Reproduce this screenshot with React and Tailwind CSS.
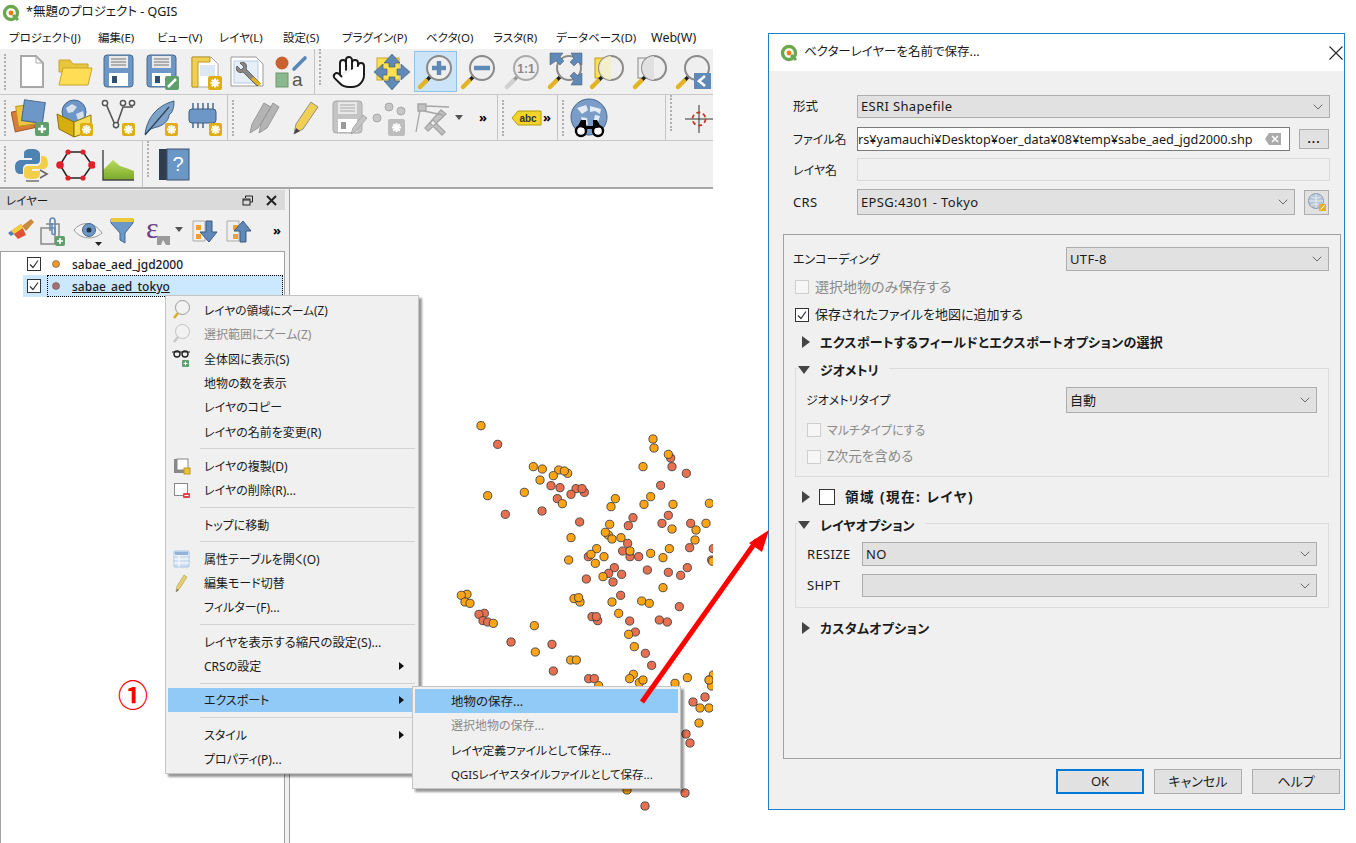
import { ChevronDown, Hand } from 'lucide-react';

// drawing helpers: toolbar icons sit in a 40x40 box
const Ico = ({ children, className = '' }) => (
  <svg viewBox="0 0 40 40" className={`w-[40px] h-[40px] shrink-0 ${className}`}>{children}</svg>
);

const Star = ({ x = 25, y = 25, s = 13, fill = '#dfae12' }) => (
  <g>
    <rect x={x} y={y} width={s} height={s} rx="2" fill={fill} />
    <g stroke="#fff" strokeWidth="2" transform={`translate(${x + s / 2} ${y + s / 2})`}>
      <line x1="-4.5" x2="4.5" />
      <line y1="-4.5" y2="4.5" />
      <line x1="-3.2" y1="-3.2" x2="3.2" y2="3.2" />
      <line x1="-3.2" y1="3.2" x2="3.2" y2="-3.2" />
    </g>
  </g>
);

const Mag = ({ children, gray }) => (
  <>
    <line x1="14" y1="25" x2="10" y2="29" stroke={gray ? '#999' : '#222'} strokeWidth="3.5" />
    <line x1="10" y1="29" x2="4" y2="35" stroke={gray ? '#d0d0d0' : '#e3b321'} strokeWidth="4.5" strokeLinecap="round" />
    <circle cx="23" cy="16" r="12" fill="#efefef" stroke={gray ? '#aaa' : '#8a8a8a'} strokeWidth="2" />
    {children}
  </>
);

const Qlogo = () => (
  <svg viewBox="0 0 18 18" className="w-[18px] h-[18px] shrink-0">
    <circle cx="9" cy="9" r="6.5" fill="#fff" stroke="#6aa84f" strokeWidth="3.4" />
    <circle cx="9" cy="9" r="2.4" fill="#ee7913" />
    <line x1="11" y1="11" x2="16" y2="16" stroke="#6aa84f" strokeWidth="3" />
  </svg>
);

const Floppy = ({ gray }) => (
  <>
    <rect x="6" y="3" width="29" height="32" rx="3" fill={gray ? '#c4c4c4' : '#6c97c6'} stroke={gray ? '#aaa' : '#4a6a8c'} />
    <rect x="11" y="4" width="19" height="12" fill="#e8e8e8" />
    <path d="M13 7h15M13 10h15M13 13h15" stroke={gray ? '#aaa' : '#777'} />
    <rect x="11" y="21" width="19" height="13" fill="#fff" />
    <rect x="14" y="24" width="5" height="7" fill={gray ? '#999' : '#2f4f73'} />
  </>
);

const Toolbar1 = {
  newDoc: <Ico><path d="M9 4h15l7 7v24H9z" fill="#fff" stroke="#a8a8a8" strokeWidth="2" /><path d="M24 4v7h7" fill="none" stroke="#a8a8a8" /></Ico>,
  open: <Ico><path d="M4 8h11l3 4h15v8H4z" fill="#e8c53d" stroke="#c9a52a" /><path d="M4 33l4-17h29l-4 17z" fill="#ffdd55" stroke="#c9a52a" /></Ico>,
  save: <Ico><Floppy /></Ico>,
  saveAs: <Ico><Floppy /><rect x="24" y="24" width="14" height="14" rx="2" fill="#5f9f6b" /><line x1="27" y1="35" x2="35" y2="27" stroke="#fff" strokeWidth="2.5" /></Ico>,
  layout: <Ico><path d="M8 5h19l7 7v23H8z" fill="#fff" stroke="#aaa" /><path d="M16 13h15v11H16z" fill="#dde8f5" /><path d="M8 5h18v5H14v25H8z" fill="#f0cf55" stroke="#bb9a22" /><Star x={24} y={24} s={14} /></Ico>,
  props: <Ico><path d="M4 5h25l7 7v22H4z" fill="#fff" stroke="#999" /><path d="M7 9h24v22H7z" fill="#e6eef8" stroke="#b9cbe2" /><path d="M13 11c4-2 8 1 6 6l14 14-3 3-14-14c-5 2-8-2-6-6l4 4 3-3z" fill="#888" stroke="#444" strokeWidth=".7" /><line x1="25" y1="26" x2="33" y2="33" stroke="#e3b321" strokeWidth="3.5" /></Ico>,
  style: <Ico><circle cx="12" cy="11" r="6.5" fill="#c9622f" /><line x1="24" y1="17" x2="35" y2="6" stroke="#5a86b8" strokeWidth="3.6" strokeLinecap="round" /><rect x="6" y="21" width="12" height="14" fill="#8cb88f" stroke="#6d9870" /><text x="22" y="34" fontSize="19" fill="#555" fontFamily="Liberation Sans">a</text></Ico>,
  panSel: <Ico><rect x="5" y="6" width="22" height="22" fill="#ffe14d" stroke="#c9a52a" /><rect x="13" y="13" width="14" height="14" fill="#ffe14d" /><path d="M20 2l8 9h-5v4h-6v-4h-5zM20 38l-8-9h5v-4h6v4h5zM2 20l9-8v5h4v6h-4v5zM38 20l-9 8v-5h-4v-6h4v-5z" fill="#5f8ab8" stroke="#456" strokeWidth=".6" /></Ico>,
  zoomIn: <Ico><Mag /><path d="M23 9v14M16 16h14" stroke="#5f8ab8" strokeWidth="4.5" /></Ico>,
  zoomOut: <Ico><Mag /><path d="M15 16h16" stroke="#5f8ab8" strokeWidth="4.5" /></Ico>,
  zoom11: <Ico><Mag gray /><text x="23" y="20.5" textAnchor="middle" fontSize="12" fontWeight="700" fill="#888" fontFamily="Liberation Sans">1:1</text></Ico>,
  zoomFull: <Ico><Mag /><path d="M4 1h13l-3 4 4 4-4 4-4-4-6 4zM36 1v12l-4-3-4 4-4-4 4-4-3-5zM36 33H25l3-5-4-4 4-4 4 4 4-3z" fill="#5f8ab8" stroke="#456" strokeWidth=".5" /></Ico>,
  zoomSel: <Ico><rect x="7" y="6" width="15" height="20" fill="#ffe14d" stroke="#b99a22" /><Mag /><path d="M23 4a12 12 0 0 0 0 24z" fill="#f3edc6" opacity=".9" /></Ico>,
  zoomLayer: <Ico><rect x="7" y="6" width="15" height="20" fill="#eee" stroke="#888" /><Mag /><path d="M23 4a12 12 0 0 0 0 24z" fill="#e0e0e0" /></Ico>,
  zoomLast: <Ico><Mag /><rect x="20" y="21" width="17" height="16" fill="#5f8ab8" /><path d="M31 24l-6 5 6 5" fill="none" stroke="#fff" strokeWidth="2.6" /></Ico>,
};

const Toolbar2 = {
  source: <Ico><rect x="2" y="12" width="20" height="20" fill="#d77d3a" stroke="#a55a25" transform="rotate(-12 12 22)" /><rect x="6" y="7" width="20" height="20" fill="#efc43f" stroke="#b99a22" transform="rotate(-8 16 17)" /><rect x="12" y="3" width="21" height="21" fill="#6c97c6" stroke="#46688e" transform="rotate(8 22 13)" /><rect x="24" y="24" width="14" height="14" rx="2" fill="#5f9f6b" /><path d="M31 27v8M27 31h8" stroke="#fff" strokeWidth="2.4" /></Ico>,
  geopkg: <Ico><circle cx="20" cy="14" r="12" fill="#6c97c6" stroke="#46688e" /><path d="M12 10l6-4 5 3-4 5-5 1zM22 16l7-3 1 6-6 3z" fill="#d5e0ee" /><path d="M3 16l17 8v15L5 31z" fill="#d8ad10" stroke="#8c7208" /><path d="M20 24l17-7v16l-17 6z" fill="#f5dd55" stroke="#8c7208" /><Star x={26} y={25} s={13} /></Ico>,
  vertex: <Ico><path d="M9 6l10 23 7-20h10" fill="none" stroke="#555" strokeWidth="1.6" /><g fill="#fff" stroke="#555" strokeWidth="1.5"><circle cx="8" cy="5" r="2.6" /><circle cx="19" cy="27" r="2.6" /><circle cx="26" cy="5" r="2.6" /><circle cx="35" cy="5" r="2.6" /></g><Star /></Ico>,
  feather: <Ico><path d="M5 36C7 22 15 8 34 3c0 8-2 12-5 14 0 6-7 11-12 12-4 1-7 2-9 4z" fill="#7ea3c9" stroke="#3f5f82" /><path d="M5 37L29 9" stroke="#2d4258" strokeWidth="1.2" /><Star /></Ico>,
  chip: <Ico><rect x="5" y="11" width="27" height="14" rx="3" fill="#6c97c6" stroke="#3f5f82" /><path d="M9 5v6M14 5v6M19 5v6M24 5v6M29 5v6M9 25v5M14 25v5M19 25v5" stroke="#3f5f82" strokeWidth="1.4" /><Star x={25} y={25} s={13} /></Ico>,
  pencils: <Ico><path d="M7 35l2-9L21 5l7 4-13 21zM16 35l2-9L30 5l6 4-12 21z" fill="#b4b4b4" stroke="#999" /></Ico>,
  pencil: <Ico><path d="M9 36l2-10L26 4l7 5-15 22z" fill="#f0cf55" stroke="#8f8f8f" /><path d="M9 36l2-6 4 3z" fill="#444" /></Ico>,
  saveGray: <Ico><Floppy gray /><path d="M24 36l2-6 10-13 4 3-11 13z" fill="#c4c4c4" stroke="#aaa" /></Ico>,
  points: <Ico><g fill="#c6c6c6" stroke="#aaa"><circle cx="8" cy="20" r="4" /><circle cx="20" cy="9" r="4" /><circle cx="32" cy="13" r="4" /></g><Star x={19} y={21} s={17} fill="#bdbdbd" /></Ico>,
  digitize: <Ico><path d="M7 6h8v7H7zM9 12L5 34M15 8l23 1M13 13l19 4M30 12L14 30l3 3 18-17zM22 22l12 12-3 3-12-12z" fill="#c2c2c2" stroke="#a5a5a5" strokeWidth="1.3" /></Ico>,
  abc: <Ico><path d="M8 20l6-7h23v14H14z" fill="#f5d327" stroke="#b49c12" /><text x="24" y="24" textAnchor="middle" fontSize="10" fontWeight="700" fill="#333" fontFamily="Liberation Sans">abc</text></Ico>,
  globe: <Ico><circle cx="20" cy="19" r="18" fill="#7a9cc6" stroke="#46688e" /><path d="M8 10l9-3 2 5-6 4zM21 8l11 3-1 5-5-3-5 1zM12 19l6 1 1 7-5-1zM26 17l5 1-2 6-4-2z" fill="#e4ebf3" /><circle cx="12" cy="33" r="5" fill="#fff" stroke="#000" strokeWidth="2.4" /><circle cx="29" cy="33" r="5" fill="#fff" stroke="#000" strokeWidth="2.4" /><path d="M9 28l3-6h5v6h7v-6h4l4 7-9 2h-5z" fill="#000" /></Ico>,
  cross: <Ico><path d="M20 7v28M6 21h28" stroke="#333" strokeWidth="1" /><circle cx="20" cy="21" r="6.5" fill="none" stroke="#c0392b" strokeWidth="1.8" strokeDasharray="4 2.8" /></Ico>,
};

const Toolbar3 = {
  python: <Ico><path d="M20 5c-7 0-8 2-8 5v4h8v2H9c-3 0-6 2-6 7s2 7 5 7h3v-5c0-3 2-5 5-5h8c3 0 4-2 4-4v-6c0-3-3-5-8-5z" fill="#4d83b3" /><path d="M20 35c5 0 8-2 8-5v-3h-8v-2h11c3 0 5-2 5-6s-2-7-5-7h-2v5c0 3-2 5-5 5h-8c-3 0-4 2-4 4v5c0 3 3 4 8 4z" fill="#f3cf49" /><path d="M28 26l7 4-7 4" fill="none" stroke="#666" strokeWidth="1.6" /><line x1="14" y1="37" x2="27" y2="37" stroke="#666" strokeWidth="1.4" /></Ico>,
  hexagon: <Ico><path d="M13 8h15l9 13-9 13H13L5 21z" fill="none" stroke="#222" strokeWidth="1.5" /><g fill="#e0202a"><circle cx="13" cy="8" r="2.6" /><circle cx="28" cy="8" r="2.6" /><circle cx="28" cy="34" r="2.6" /><circle cx="13" cy="34" r="2.6" /><circle cx="5" cy="21" r="3.8" /><circle cx="37" cy="21" r="3.8" /></g></Ico>,
  profile: <Ico><defs><linearGradient id="prof" x1="0" y1="0" x2="0" y2="1"><stop offset="0" stopColor="#b8dc5a" /><stop offset="1" stopColor="#7aa82c" /></linearGradient></defs><path d="M5 36V26l10-10 7 6 6 2 8 3v9z" fill="url(#prof)" /><path d="M5 6v30h31" fill="none" stroke="#444" strokeWidth="1.4" /></Ico>,
  help: <Ico><rect x="5" y="5" width="8" height="31" fill="#2e3e4e" /><rect x="13" y="5" width="22" height="31" fill="#6b97c6" stroke="#3c536b" /><text x="24" y="27" textAnchor="middle" fontSize="20" fill="#fff" fontFamily="Liberation Sans">?</text></Ico>,
};

const DockIcons = {
  brush: <Ico><path d="M9 20l10-7 5 11-8 4z" fill="#e0533a" /><path d="M9 20l10-7 2 4-9 6z" fill="#f2cf3d" /><path d="M6 22l3-2 3 3-3 2z" fill="#4c7fbd" /><path d="M20 15l9-7 3 3-8 9z" fill="#c98a3c" /></Ico>,
  clip: <Ico><path d="M9 17h14v16H9z" fill="#eee" stroke="#888" strokeWidth="1.5" /><path d="M14 13h13v15" fill="none" stroke="#888" strokeWidth="1.5" /><path d="M18 20V10c0-4 5-4 5 0v12c0 2-3 2-3 0V12" fill="none" stroke="#5f8ab8" strokeWidth="1.6" /><rect x="23" y="25" width="10" height="10" rx="2" fill="#5f9f6b" /><path d="M28 27v6M25 30h6" stroke="#fff" strokeWidth="1.6" /></Ico>,
  eye: <Ico><path d="M6 19c7-9 20-9 28 3-8 7-21 7-28-3z" fill="#f2f2f2" stroke="#999" /><circle cx="21" cy="19" r="6.5" fill="#6c97c6" stroke="#46688e" /><circle cx="21" cy="19" r="2.5" fill="#234" /><path d="M27 31h7l-3.500 4z" fill="#222" /></Ico>,
  filter: <Ico><path d="M9 8h22v4l-8 10v10l-5-3v-7L9 12z" fill="#6c97c6" stroke="#46688e" /><rect x="9" y="7" width="22" height="4" fill="#ecc93a" /></Ico>,
  epsilon: <Ico><text x="9" y="27" fontSize="30" fill="#6b3f8c" fontFamily="Liberation Serif">ε</text><path d="M20 25h13v9h-4l-3-5-2 5h-4z" fill="#9a9a9a" /></Ico>,
  down: <Ico><path d="M8 10h12v20H8z" fill="none" stroke="#aaa" /><rect x="11" y="14" width="5" height="5" fill="#f0a030" /><rect x="11" y="23" width="5" height="5" fill="#f0a030" /><path d="M21 10h6v11h5l-8 10-9-10h6z" fill="#5f8ab8" stroke="#3c5a7d" /></Ico>,
  up: <Ico><path d="M8 10h12v20H8z" fill="none" stroke="#aaa" /><rect x="14" y="14" width="5" height="5" fill="#f0a030" /><rect x="14" y="23" width="5" height="5" fill="#f0a030" /><path d="M21 31h6V20h5l-8-10-9 10h6z" fill="#5f8ab8" stroke="#3c5a7d" /></Ico>,
};

const Handle = () => <div className="w-[3px] h-[36px] ml-[4px] border-l-[2px] border-dotted border-[#b0b0b0] shrink-0" />;
const Slot = ({ children, className = 'w-[43px]' }) => <div className={`h-full flex items-center justify-center shrink-0 ${className}`}>{children}</div>;
const More = ({ className = '' }) => <span className={`text-[13px] font-bold text-black leading-none ${className}`}>»</span>;
const Drop = ({ className = '' }) => <svg viewBox="0 0 8 5" className={`w-[8px] h-[5px] shrink-0 ${className}`}><path d="M0 0h8L4 5z" fill="#555" /></svg>;
const Group = ({ children, className }) => <div className={`h-full flex items-center border-r border-[#c4c4c4] shrink-0 ${className}`}>{children}</div>;
// the glyphs of this stack ride a little high, so text gets nudged down inside its flex row
const T = ({ children, className = '' }) => <span className={`block pt-[2px] whitespace-nowrap ${className}`}>{children}</span>;
const T1 = ({ children, className = '' }) => <span className={`block whitespace-nowrap ${className}`}>{children}</span>;

const menus = [
  ['プロジェクト(J)', 'w-[89px]'], ['編集(E)', 'w-[59px]'], ['ビュー(V)', 'w-[62px]'], ['レイヤ(L)', 'w-[64px]'], ['設定(S)', 'w-[59px]'],
  ['プラグイン(P)', 'w-[84px]'], ['ベクタ(O)', 'w-[67px]'], ['ラスタ(R)', 'w-[63px]'], ['データベース(D)', 'w-[95px]'], ['Web(W)', 'w-[60px] text-[12.5px]'],
];

// map points, read off at 3x and kept in that scale
const orange3x = [[123,77],[280,200],[307,207],[383,220],[356,210],[373,213],[340,227],[300,240],[253,277],[143,287],[367,311],[393,413],[386,480],[639,117],[642,144],[685,163],[609,200],[632,290],[526,296],[513,320],[612,313],[699,313],[808,310],[509,373],[798,370],[696,387],[768,390],[505,405],[496,397],[516,417],[543,413],[765,420],[688,446],[470,446],[570,453],[453,463],[492,470],[632,460],[669,473],[818,484],[466,490],[489,530],[669,563],[81,583],[64,586],[75,606],[90,610],[402,596],[420,606],[416,593],[516,606],[605,603],[628,610],[160,670],[536,640],[283,677],[566,703],[583,740],[286,756],[392,780],[409,780],[476,857],[580,823],[569,836],[598,848],[609,840],[705,850],[742,833],[808,840],[820,825],[815,858]];
const red3x = [[173,133],[333,257],[360,263],[433,277],[408,266],[426,266],[393,283],[352,296],[306,333],[196,343],[419,366],[692,174],[696,200],[739,220],[662,256],[685,346],[579,353],[565,377],[666,370],[752,370],[563,430],[749,443],[820,446],[548,453],[445,470],[570,470],[596,470],[815,480],[742,503],[523,503],[506,520],[545,523],[622,510],[685,517],[722,526],[439,537],[519,546],[542,586],[718,620],[133,640],[117,643],[129,662],[143,666],[456,650],[473,662],[469,650],[569,663],[658,660],[682,666],[586,696],[213,726],[336,733],[616,760],[635,796],[340,813],[446,836],[463,836]];
const orangePx = [[709,680],[700,708],[709,708],[699,723],[627,790]];
const redPx = [[705,697],[693,702],[686,734],[690,743],[685,793],[645,806]];

const MapDots = () => (
  <svg viewBox="290 189 423 654" className="w-[423px] h-[654px]">
    <g stroke="#3d3d3d" strokeWidth=".9">
      {red3x.map(([x, y], i) => <circle key={i} cx={440 + x / 3} cy={400 + y / 3} r="4.1" fill="#e8704e" />)}
      {redPx.map(([x, y], i) => <circle key={i} cx={x} cy={y} r="4.1" fill="#e8704e" />)}
      {orange3x.map(([x, y], i) => <circle key={i} cx={440 + x / 3} cy={400 + y / 3} r="4.1" fill="#ffa514" />)}
      {orangePx.map(([x, y], i) => <circle key={i} cx={x} cy={y} r="4.1" fill="#ffa514" />)}
    </g>
  </svg>
);

const Check = ({ checked, disabled, className = '' }) => (
  <div className={`w-[14px] h-[14px] shrink-0 border flex items-center justify-center ${disabled ? 'border-[#cfcfcf] bg-[#f6f6f6]' : 'border-[#333] bg-white'} ${className}`}>
    {checked && <svg viewBox="0 0 12 12" className="w-[12px] h-[12px]"><path d="M2 6.5l3 3 5-7" fill="none" stroke="#333" strokeWidth="1.2" /></svg>}
  </div>
);

const MenuIcons = {
  zoom: <svg viewBox="0 0 20 20" className="w-[20px] h-[20px]"><line x1="7" y1="13" x2="3" y2="18" stroke="#d8ae2a" strokeWidth="2.6" /><circle cx="11.500" cy="7.500" r="7" fill="#f2f2f2" stroke="#999" /></svg>,
  zoomGray: <svg viewBox="0 0 20 20" className="w-[20px] h-[20px]"><line x1="7" y1="13" x2="3" y2="18" stroke="#c8c8c8" strokeWidth="2.6" /><circle cx="11.500" cy="7.500" r="7" fill="#f2f2f2" stroke="#c0c0c0" /></svg>,
  glasses: <svg viewBox="0 0 20 20" className="w-[20px] h-[20px]"><circle cx="6" cy="5" r="3" fill="none" stroke="#222" strokeWidth="1.4" /><circle cx="14" cy="5" r="3" fill="none" stroke="#222" strokeWidth="1.4" /><path d="M1 3h18" stroke="#222" strokeWidth="1" /><rect x="11" y="11" width="7" height="7" rx="1" fill="#5f9f6b" /><path d="M14.5 12.5v4M12.500 14.500h4" stroke="#fff" /></svg>,
  dup: <svg viewBox="0 0 20 20" className="w-[20px] h-[20px]"><rect x="3" y="3" width="14" height="14" fill="#888" /><rect x="6" y="3" width="11" height="11" fill="#fff" stroke="#888" /><rect x="13" y="12" width="6" height="6" fill="#e9c23a" stroke="#b99a22" /></svg>,
  del: <svg viewBox="0 0 20 20" className="w-[20px] h-[20px]"><rect x="3.500" y="3.500" width="13" height="12" fill="#fff" stroke="#888" /><rect x="12" y="13" width="7" height="5" rx="1" fill="#e0444c" /><path d="M13.500 15.500h4" stroke="#fff" /></svg>,
  table: <svg viewBox="0 0 20 20" className="w-[20px] h-[20px]"><rect x="3" y="2" width="15" height="16" rx="1" fill="#cfe0f2" stroke="#a9c3de" /><path d="M3 6h15M3 10h15M3 14h15M8 6v12" stroke="#fff" /><rect x="4" y="3" width="13" height="3" fill="#8fb2d6" /></svg>,
  pencil: <svg viewBox="0 0 20 20" className="w-[20px] h-[20px]"><path d="M5 19l1-6 7-11 3 2-7 11z" fill="#e6cf6a" stroke="#a89a5a" strokeWidth=".6" /><path d="M5 19l1-3 2 1z" fill="#666" /></svg>,
};

const RightTri = ({ className = '' }) => <svg viewBox="0 0 5 8" className={`w-[5px] h-[8px] shrink-0 ${className}`}><path d="M0 0l5 4-5 4z" fill="#111" /></svg>;

const Item = ({ icon, text, dim, active, sub, textClass = '' }) => (
  <div className={`h-[24.3px] flex items-center ${active ? 'bg-[#91c9f7]' : ''}`}>
    <div className="w-[36px] shrink-0 pl-[3px]">{icon}</div>
    <T className={`flex-1 ${dim ? 'text-[#8a8a8a]' : ''} ${textClass}`}>{text}</T>
    {sub && <RightTri className="mr-[12px]" />}
  </div>
);
const Sep = () => <div className="h-[10px] flex items-center pl-[32px] pr-[1px]"><div className="w-full h-px bg-[#d2d2d2]" /></div>;

const Combo = ({ children, className = '', textClass = '' }) => (
  <div className={`flex items-center justify-between pl-[3px] pr-[3px] bg-[#e1e1e1] border border-[#adadad] shrink-0 ${className}`}>
    <span className={`block ${textClass}`}>{children}</span>
    <ChevronDown className="w-[16px] h-[16px] text-[#555]" strokeWidth={1.3} />
  </div>
);
const TriRight = () => <svg viewBox="0 0 8 12" className="w-[8px] h-[12px] shrink-0"><path d="M0 0l8 6-8 6z" fill="#444" /></svg>;
const TriDown = () => <svg viewBox="0 0 12 8" className="w-[12px] h-[8px] shrink-0"><path d="M0 0h12L6 8z" fill="#444" /></svg>;
const DlgButton = ({ children, primary }) => (
  <div className={`w-[88px] h-[25px] flex items-center justify-center bg-[#e1e1e1] border ${primary ? 'border-[2px] border-[#0078d7]' : 'border-[#adadad]'}`}><T1 className="text-[13px]">{children}</T1></div>
);
const Legend = ({ children }) => (
  <div className="absolute left-[2px] -top-[8px] h-[18px] flex items-center gap-[10px] pr-[10px] bg-[#f0f0f0] font-bold"><TriDown /><T1 className="text-[13px]">{children}</T1></div>
);
const latin = 'text-[13px] tracking-[0.35px]';

export default function App() {
  return (
    <div className="relative w-[1356px] h-[843px] overflow-hidden flex bg-white text-[12px] leading-none text-[#1a1a1a] font-['Noto_Sans','Noto_Sans_CJK_JP',sans-serif] [font-feature-settings:'palt']">
      {/* QGIS main window */}
      <div className="w-[713px] h-[843px] shrink-0 flex flex-col">
        <div className="h-[25px] flex items-center gap-[6px] pl-[2px]">
          <Qlogo />
          <span className="text-[12.5px]">*無題のプロジェクト - QGIS</span>
        </div>
        <div className="h-[24px] flex items-center pl-[9px]">
          {menus.map(([label, w]) => <T key={label} className={`shrink-0 text-[11.5px] ${w}`}>{label}</T>)}
        </div>

        <div className="h-[46px] flex bg-[#f0f0f0] border-b border-[#c8c8c8]">
          <Group className="w-[315px]">
            <Handle />
            <div className="w-[3px]" />
            {['newDoc', 'open', 'save', 'saveAs', 'layout', 'props', 'style'].map((k) => <Slot key={k}>{Toolbar1[k]}</Slot>)}
          </Group>
          <Handle />
          <Slot className="w-[54px]"><Hand className="w-[36px] h-[36px] shrink-0 fill-white" strokeWidth={1.3} /></Slot>
          <Slot className="w-[32px]">{Toolbar1.panSel}</Slot>
          <div className="w-[43px] h-[41px] ml-[6px] self-center flex items-center justify-center bg-[#cce4f7] border border-[#8cc4ec] shrink-0">{Toolbar1.zoomIn}</div>
          <Slot className="w-[44px]">{Toolbar1.zoomOut}</Slot>
          <Slot className="w-[44px]">{Toolbar1.zoom11}</Slot>
          <Slot className="w-[42px]">{Toolbar1.zoomFull}</Slot>
          <Slot className="w-[42px]">{Toolbar1.zoomSel}</Slot>
          <Slot className="w-[43px]">{Toolbar1.zoomLayer}</Slot>
          <Slot className="w-[43px]">{Toolbar1.zoomLast}</Slot>
        </div>

        <div className="h-[46px] flex bg-[#f0f0f0] border-b border-[#c8c8c8]">
          <Group className="w-[228px]">
            <Handle />
            <div className="w-[3px]" />
            <Slot>{Toolbar2.source}</Slot>
            <Slot>{Toolbar2.geopkg}</Slot>
            <Slot>{Toolbar2.vertex}</Slot>
            <Slot>{Toolbar2.feather}</Slot>
            <Slot className="w-[46px]">{Toolbar2.chip}</Slot>
          </Group>
          <Group className="w-[270px]">
            <Handle />
            <div className="w-[7px]" />
            <Slot className="w-[42px]">{Toolbar2.pencils}</Slot>
            <Slot className="w-[42px]">{Toolbar2.pencil}</Slot>
            <Slot className="w-[42px]">{Toolbar2.saveGray}</Slot>
            <Slot className="w-[42px]">{Toolbar2.points}</Slot>
            <Slot className="w-[42px]">{Toolbar2.digitize}</Slot>
            <Drop className="ml-[3px]" />
            <More className="ml-[16px]" />
          </Group>
          <Group className="w-[60px]">
            <Handle />
            <Slot className="w-[38px]">{Toolbar2.abc}</Slot>
            <More />
          </Group>
          <Group className="w-[108px]">
            <Handle />
            <Slot className="w-[43px] ml-[2px]">{Toolbar2.globe}</Slot>
          </Group>
          <Handle />
          <Slot className="w-[40px] ml-[6px]">{Toolbar2.cross}</Slot>
        </div>

        <div className="h-[46px] flex bg-[#f0f0f0]">
          <Group className="w-[143px]">
            <Handle />
            <div className="w-[3px]" />
            <Slot>{Toolbar3.python}</Slot>
            <Slot>{Toolbar3.hexagon}</Slot>
            <Slot>{Toolbar3.profile}</Slot>
          </Group>
          <Handle />
          <Slot className="w-[43px] ml-[2px]">{Toolbar3.help}</Slot>
        </div>
        <div className="h-[2px] bg-[#a8a8a8]" />

        <div className="flex-1 flex min-h-0">
          {/* Layers panel */}
          <div className="w-[285px] shrink-0 flex flex-col bg-[#f0f0f0] pt-px">
            <div className="h-[20px] flex items-center pl-[6px] pr-[8px] bg-[#dadada]">
              <T className="flex-1 text-[11.5px]">レイヤー</T>
              <svg viewBox="0 0 11 11" className="w-[11px] h-[11px] mr-[13px]"><path d="M3.500 3V1h7v6H8" fill="none" stroke="#222" /><rect x="1" y="4" width="7" height="6" fill="none" stroke="#222" /><path d="M1 5h7" stroke="#222" /></svg>
              <svg viewBox="0 0 11 11" className="w-[11px] h-[11px]"><path d="M1 1l9 9M10 1l-9 9" stroke="#222" strokeWidth="2" /></svg>
            </div>
            <div className="h-[41px] flex items-center pl-[2px]">
              {DockIcons.brush}
              <div className="-ml-[10px]">{DockIcons.clip}</div>
              <div className="-ml-[4px]">{DockIcons.eye}</div>
              <div className="-ml-[6px]">{DockIcons.filter}</div>
              <div className="-ml-[5px]">{DockIcons.epsilon}</div>
              <Drop className="-ml-[2px] -mt-[2px]" />
              <div className="ml-[2px]">{DockIcons.down}</div>
              <div className="-ml-[6px]">{DockIcons.up}</div>
              <More className="ml-[14px]" />
            </div>
            <div className="flex-1 bg-white border-t border-r border-l border-[#a0a0a0]">
              <div className="h-[23px] ml-[22px] mr-px flex items-center pl-[4px]">
                <Check checked />
                <svg viewBox="0 0 8 8" className="w-[8px] h-[8px] ml-[11px]"><circle cx="4" cy="4" r="3.500" fill="#f29a1f" stroke="#555" strokeWidth=".6" /></svg>
                <T className="ml-[12px] font-medium">sabae_aed_jgd2000</T>
              </div>
              <div className="h-[22px] ml-[22px] mr-px flex items-center pl-[4px] bg-[#cce8ff]">
                <Check checked />
                <div className="flex-1 h-full ml-[6px] flex items-center pl-[4px] border border-dotted border-black">
                  <svg viewBox="0 0 8 8" className="w-[8px] h-[8px]"><circle cx="4" cy="4" r="3.500" fill="#a8706f" stroke="#555" strokeWidth=".6" /></svg>
                  <T className="ml-[12px] font-medium underline">sabae_aed_tokyo</T>
                </div>
              </div>
            </div>
          </div>
          <div className="w-[5px] shrink-0 bg-[#f0f0f0] border-r border-[#a0a0a0]" />
          <div className="flex-1 min-w-0 bg-white"><MapDots /></div>
        </div>
      </div>

      {/* Save dialog */}
      <div className="w-[577px] h-[777px] mt-[33px] ml-[55px] shrink-0 flex flex-col bg-[#f0f0f0] border border-[#1f7fc9]">
        <div className="h-[37px] shrink-0 flex items-center bg-white pl-[11px] pr-[1px] gap-[6px]">
          <Qlogo />
          <span className="flex-1 text-[12.5px]">ベクターレイヤーを名前で保存...</span>
          <svg viewBox="0 0 14 14" className="w-[14px] h-[14px]"><path d="M.5.5l13 13M13.500.5l-13 13" stroke="#222" strokeWidth="1.1" /></svg>
        </div>
        <div className="pt-[24px] pl-[24px]">
          <div className="flex items-center h-[23px]">
            <T className="w-[64px] text-[12.5px]">形式</T>
            <Combo className="w-[473px] h-[23px]" textClass={latin}>ESRI Shapefile</Combo>
          </div>
          <div className="flex items-center h-[24px] mt-[9px]">
            <T className="w-[64px]">ファイル名</T>
            <div className="w-[433px] h-[24px] flex items-center justify-between overflow-hidden bg-white border border-[#7a7a7a] pr-[8px]">
              <T1 className="text-[12.7px]">rs¥yamauchi¥Desktop¥oer_data¥08¥temp¥sabe_aed_jgd2000.shp</T1>
              <svg viewBox="0 0 16 12" className="w-[16px] h-[12px] shrink-0"><path d="M4 0h12v12H4L0 6z" fill="#aaa" /><path d="M7 3l6 6M13 3l-6 6" stroke="#fff" strokeWidth="1.500" /></svg>
            </div>
            <div className="w-[30px] h-[20px] ml-[9px] flex items-center justify-center bg-[#e1e1e1] border border-[#adadad] font-bold tracking-[1px]">...</div>
          </div>
          <div className="flex items-center h-[23px] mt-[7px]">
            <T className="w-[64px]">レイヤ名</T>
            <div className="w-[473px] h-[23px] border border-[#d9d9d9]" />
          </div>
          <div className="flex items-center h-[26px] mt-[8px]">
            <T1 className={`w-[64px] ${latin}`}>CRS</T1>
            <Combo className="w-[438px] h-[26px]" textClass={latin}>EPSG:4301 - Tokyo</Combo>
            <div className="w-[25px] h-[25px] ml-[9px] flex items-center justify-center bg-[#e1e1e1] border border-[#adadad]">
              <svg viewBox="0 0 20 20" className="w-[20px] h-[20px]"><circle cx="9" cy="9" r="7.500" fill="#b7c7d8" stroke="#8d9fb2" /><path d="M2 9h14M9 2v14M4 4.500c3 2 7 2 10 0M4 13.500c3-2 7-2 10 0" stroke="#e8eef5" fill="none" /><rect x="12" y="12" width="7" height="7" fill="#e3b321" /><path d="M13.500 17.500l4-4" stroke="#fff" /></svg>
            </div>
          </div>
        </div>

        <div className="w-[558px] h-[525px] ml-[14px] mt-[19px] border border-[#a0a0a0] shrink-0">
          <div className="flex items-center pl-[9px] pt-[12px]">
            <T className="w-[273px]">エンコーディング</T>
            <Combo className="w-[263px] h-[24px]" textClass={latin}>UTF-8</Combo>
          </div>
          <div className="h-[28px] mt-[2px] flex items-center pl-[11px] gap-[6px] text-[#8a8a8a]"><Check disabled /><T1 className="text-[14px]">選択地物のみ保存する</T1></div>
          <div className="h-[27px] flex items-center pl-[11px] gap-[6px]"><Check checked /><T1 className="text-[13px]">保存されたファイルを地図に追加する</T1></div>
          <div className="h-[28px] flex items-center pl-[18px] gap-[10px] font-bold"><TriRight /><T1 className="text-[13px] tracking-[0.3px]">エクスポートするフィールドとエクスポートオプションの選択</T1></div>

          <div className="relative w-[534px] h-[109px] ml-[11px] mt-[12px] border border-[#dcdcdc]">
            <Legend>ジオメトリ</Legend>
            <div className="flex items-center pl-[10px] pt-[18px]">
              <T className="w-[260px]">ジオメトリタイプ</T>
              <Combo className="w-[251px] h-[26px]" textClass="text-[13px]">自動</Combo>
            </div>
            <div className="h-[27px] mt-[3px] flex items-center pl-[11px] gap-[6px] text-[#8a8a8a]"><Check disabled /><T>マルチタイプにする</T></div>
            <div className="h-[27px] flex items-center pl-[11px] gap-[6px] text-[#8a8a8a]"><Check disabled /><T1 className="text-[13.5px]">Z次元を含める</T1></div>
          </div>

          <div className="h-[20px] mt-[10px] flex items-center pl-[18px] font-bold">
            <TriRight />
            <div className="w-[16px] h-[16px] ml-[9px] mr-[10px] border border-[#333] bg-white" />
            <T className="text-[13.5px] tracking-[1.5px]">領域 (現在: レイヤ)</T>
          </div>

          <div className="relative w-[534px] h-[85px] ml-[11px] mt-[16px] border border-[#dcdcdc]">
            <Legend>レイヤオプション</Legend>
            <div className="flex items-center pl-[11px] pt-[18px]">
              <T1 className={`w-[55px] ${latin}`}>RESIZE</T1>
              <Combo className="w-[455px] h-[24px]" textClass={latin}>NO</Combo>
            </div>
            <div className="flex items-center pl-[11px] mt-[8px]">
              <T1 className={`w-[55px] ${latin}`}>SHPT</T1>
              <Combo className="w-[455px] h-[23px]" />
            </div>
          </div>

          <div className="h-[20px] mt-[10px] flex items-center pl-[18px] gap-[10px] font-bold"><TriRight /><T1 className="text-[13px] tracking-[0.3px]">カスタムオプション</T1></div>
        </div>

        <div className="flex justify-end gap-[10px] mt-[10px] pr-[4px]">
          <DlgButton primary>OK</DlgButton>
          <DlgButton>キャンセル</DlgButton>
          <DlgButton>ヘルプ</DlgButton>
        </div>
      </div>

      {/* context menu */}
      <div className="absolute left-[165px] top-[295px] w-[254px] p-[2px] bg-[#f0f0f0] border border-[#c4c4c4] shadow-[3px_3px_2px_rgba(0,0,0,0.4)]">
        <Item icon={MenuIcons.zoom} text="レイヤの領域にズーム(Z)" textClass="text-[11.7px]" />
        <Item icon={MenuIcons.zoomGray} text="選択範囲にズーム(Z)" dim />
        <Item icon={MenuIcons.glasses} text="全体図に表示(S)" />
        <Item text="地物の数を表示" />
        <Item text="レイヤのコピー" />
        <Item text="レイヤの名前を変更(R)" />
        <Sep />
        <Item icon={MenuIcons.dup} text="レイヤの複製(D)" />
        <Item icon={MenuIcons.del} text="レイヤの削除(R)..." />
        <Sep />
        <Item text="トップに移動" />
        <Sep />
        <Item icon={MenuIcons.table} text="属性テーブルを開く(O)" />
        <Item icon={MenuIcons.pencil} text="編集モード切替" />
        <Item text="フィルター(F)..." />
        <Sep />
        <Item text="レイヤを表示する縮尺の設定(S)..." textClass="text-[12.4px]" />
        <Item text="CRSの設定" sub />
        <Sep />
        <Item text="エクスポート" active sub />
        <Sep />
        <Item text="スタイル" sub />
        <Item text="プロパティ(P)..." />
      </div>
      <div className="absolute left-[412px] top-[686px] w-[269px] p-[2px] bg-[#f0f0f0] border border-[#c4c4c4] shadow-[3px_3px_2px_rgba(0,0,0,0.4)]">
        <Item text="地物の保存..." active textClass="text-[12.5px]" />
        <Item text="選択地物の保存..." dim />
        <Item text="レイヤ定義ファイルとして保存..." textClass="text-[11.8px]" />
        <Item text="QGISレイヤスタイルファイルとして保存..." textClass="text-[11.5px]" />
      </div>

      {/* annotations added on top of the screenshot */}
      <span className="absolute left-[118px] top-[680px] text-[30px] font-bold text-[#ff0000]">①</span>
      <svg viewBox="0 0 140 190" className="absolute left-[635px] top-[525px] w-[140px] h-[190px] pointer-events-none">
        <line x1="7" y1="177" x2="122" y2="15" stroke="#ff0000" strokeWidth="5" />
        <path d="M134 5l-20 13 13 9z" fill="#ff0000" />
      </svg>
    </div>
  );
}
